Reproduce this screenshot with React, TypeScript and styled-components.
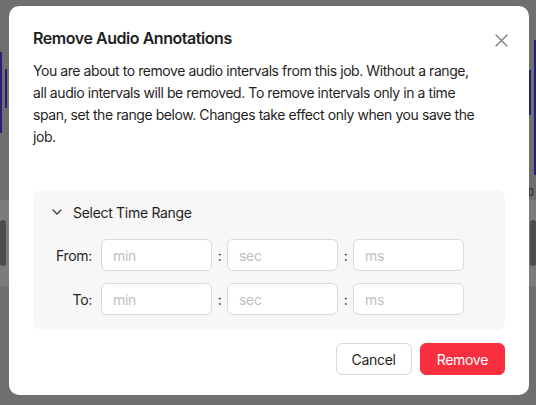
import styled, { createGlobalStyle } from 'styled-components';

const GlobalStyle = createGlobalStyle`
  html, body {
    margin: 0;
    padding: 0;
    width: 536px;
    height: 405px;
    overflow: hidden;
    font-family: Inter, "Liberation Sans", sans-serif;
  }
  * { box-sizing: border-box; }
`;

/* the page behind the dialog */
const Page = styled.div`
  position: relative;
  width: 536px;
  height: 405px;
  background: #cacaca;
  display: flex;
  flex-direction: column;
`;

const WaveTrack = styled.div`
  height: 186px;
  display: flex;
  justify-content: space-between;
  padding-top: 40px;
`;

const WaveGroup = styled.div<{ $reverse?: boolean }>`
  display: flex;
  gap: 3px;
  flex-direction: ${p => (p.$reverse ? 'row-reverse' : 'row')};
`;

const WaveBar = styled.div<{ $top: number; $h: number; $w: number }>`
  width: ${p => p.$w}px;
  height: ${p => p.$h}px;
  margin-top: ${p => p.$top}px;
  background: #4a38da;
`;

const TimeRow = styled.div`
  height: 14px;
  font-size: 10px;
  color: #333;
  display: flex;
  justify-content: flex-end;
  padding-right: 2px;
`;

const ClipTrack = styled.div`
  height: 86px;
  background: #e2e2e2;
  display: flex;
  justify-content: space-between;
  align-items: center;
`;

const Clip = styled.div`
  width: 6px;
  height: 46px;
  background: #8a8a8a;
  border-radius: 3px;
`;

const Mask = styled.div`
  position: absolute;
  inset: 0;
  background: rgba(0, 0, 0, 0.45);
`;

/* dialog */
const Dialog = styled.div`
  position: absolute;
  top: 6px;
  left: 9px;
  width: 520px;
  background: #fff;
  border-radius: 10px;
  padding: 20px 24px 20px;
  color: #1f1f1f;
  letter-spacing: -0.3px;
`;

const Title = styled.h2`
  margin: 0;
  font-size: 16px;
  line-height: 24px;
  font-weight: 600;
  letter-spacing: -0.45px;
`;

const CloseButton = styled.button`
  position: absolute;
  top: 27px;
  right: 21px;
  width: 14px;
  height: 14px;
  padding: 0;
  border: none;
  background: none;
  display: flex;
  align-items: center;
  justify-content: center;
  color: #7a7a7a;
`;

const Body = styled.p`
  width: 452px;
  margin: 10px 0 42px;
  font-size: 14px;
  line-height: 22px;
  letter-spacing: -0.43px;
`;

const RangePanel = styled.div`
  background: #f7f7f7;
  border-radius: 8px;
`;

const PanelHeader = styled.div`
  height: 44px;
  display: flex;
  align-items: center;
  gap: 11px;
  padding: 0 14px 0 19px;
  font-size: 14px;
`;

const PanelContent = styled.div`
  display: flex;
  flex-direction: column;
  gap: 12px;
  padding: 5px 16px 15px;
`;

const TimeRowField = styled.div`
  display: flex;
  align-items: center;
`;

const FieldLabel = styled.span`
  width: 43px;
  margin-right: 9px;
  text-align: right;
  font-size: 14px;
`;

const TimeInput = styled.input`
  width: 111px;
  height: 32px;
  border: 1px solid #d9d9d9;
  border-radius: 6px;
  background: #fff;
  padding: 0 11px;
  font-family: inherit;
  font-size: 14px;
  letter-spacing: inherit;
  color: #1f1f1f;
  outline: none;

  &::placeholder {
    color: #bfbfbf;
  }
`;

const Colon = styled.span`
  width: 15px;
  text-align: center;
  font-size: 14px;
`;

const Footer = styled.div`
  display: flex;
  justify-content: flex-end;
  gap: 8px;
  margin-top: 13px;
`;

const Button = styled.button<{ $primary?: boolean }>`
  height: 32px;
  padding: 0 ${p => (p.$primary ? 16 : 15)}px;
  border-radius: 6px;
  font-family: inherit;
  font-size: 14px;
  letter-spacing: inherit;
  border: 1px solid ${p => (p.$primary ? '#f92f40' : '#d9d9d9')};
  background: ${p => (p.$primary ? '#f92f40' : '#fff')};
  color: ${p => (p.$primary ? '#fff' : '#1f1f1f')};
`;

const leftBars = [
  { top: 12, h: 81, w: 2 },
  { top: 29, h: 39, w: 2 },
];
const rightBars = [
  { top: 0, h: 135, w: 2 },
  { top: 30, h: 45, w: 2 },
  { top: 13, h: 78, w: 2 },
];

const units = ['min', 'sec', 'ms'];

const TimeFields = ({ label }: { label: string }) => (
  <TimeRowField>
    <FieldLabel>{label}</FieldLabel>
    {units.map((u, i) => (
      <span key={u} style={{ display: 'contents' }}>
        {i > 0 && <Colon>:</Colon>}
        <TimeInput placeholder={u} />
      </span>
    ))}
  </TimeRowField>
);

const App = () => {
  return (
    <>
      <GlobalStyle />
      <Page>
        <WaveTrack>
          <WaveGroup>
            {leftBars.map((b, i) => (
              <WaveBar key={i} $top={b.top} $h={b.h} $w={b.w} />
            ))}
          </WaveGroup>
          <WaveGroup $reverse>
            {rightBars.map((b, i) => (
              <WaveBar key={i} $top={b.top} $h={b.h} $w={b.w} />
            ))}
          </WaveGroup>
        </WaveTrack>
        <TimeRow>2:0</TimeRow>
        <ClipTrack>
          <Clip />
          <Clip />
        </ClipTrack>
        <Mask />
        <Dialog>
          <Title>Remove Audio Annotations</Title>
          <CloseButton aria-label="Close">
            <svg width="13" height="13" viewBox="0 0 13 13" fill="none">
              <path d="M1 1L12 12M12 1L1 12" stroke="currentColor" strokeWidth="1.3" strokeLinecap="round" />
            </svg>
          </CloseButton>
          <Body>
            You are about to remove audio intervals from this job. Without a range, all audio
            intervals will be removed. To remove intervals only in a time span, set the range
            below. Changes take effect only when you save the job.
          </Body>
          <RangePanel>
            <PanelHeader>
              <svg width="10" height="6" viewBox="0 0 10 6" fill="none">
                <path d="M1 1L5 5L9 1" stroke="#333" strokeWidth="1.2" strokeLinecap="round" strokeLinejoin="round" />
              </svg>
              <span>Select Time Range</span>
            </PanelHeader>
            <PanelContent>
              <TimeFields label="From:" />
              <TimeFields label="To:" />
            </PanelContent>
          </RangePanel>
          <Footer>
            <Button>Cancel</Button>
            <Button $primary>Remove</Button>
          </Footer>
        </Dialog>
      </Page>
    </>
  );
};

export default App;
